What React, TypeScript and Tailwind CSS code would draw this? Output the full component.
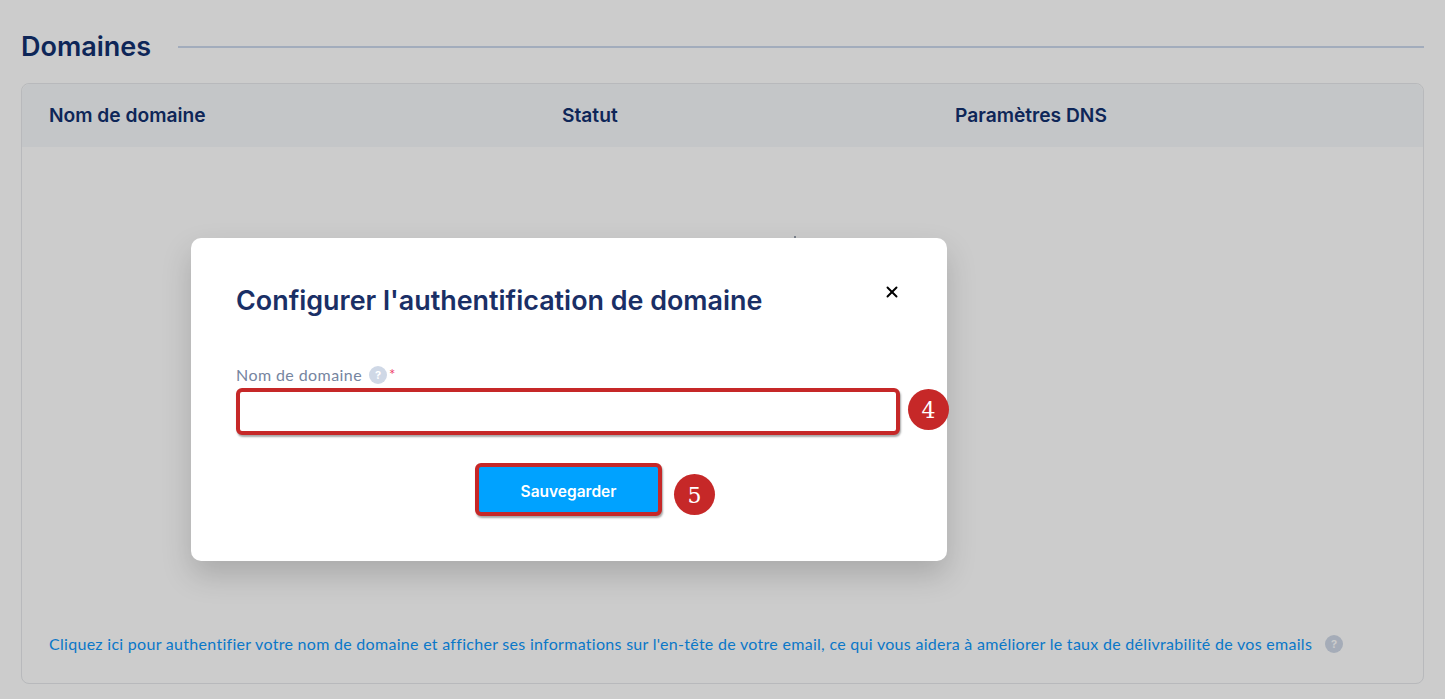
import { X } from 'lucide-react'

function HelpDot({ className }: { className: string }) {
  return (
    <span className={`inline-flex items-center justify-center rounded-full bg-[#cfd8e6] text-white font-bold font-['Inter',sans-serif] ${className}`}>
      ?
    </span>
  )
}

function Badge({ n }: { n: number }) {
  return (
    <span className="flex h-[41px] w-[41px] shrink-0 items-center justify-center rounded-full bg-[#c62828] pt-[1px] text-[22px] text-white font-['DejaVu_Serif',serif]">
      {n}
    </span>
  )
}

export default function App() {
  return (
    <div className="relative h-[699px] overflow-hidden bg-white font-['Inter',sans-serif]">
      <div className="px-[21px] pt-[28px]">
        <div className="flex items-center gap-[27px]">
          <h1 className="text-[27px] leading-[37px] font-semibold text-[#12306f]">Domaines</h1>
          <div className="h-[2px] flex-1 bg-[#cbd8eb]" />
        </div>

        <div className="mt-[18px] flex h-[601px] flex-col rounded-lg border border-[#e6e8eb]">
          <div className="flex h-[63px] items-center rounded-t-lg bg-[#f6f8fa] pl-[27px] text-[19.2px] font-semibold text-[#12306f]">
            <span className="w-[513px]">Nom de domaine</span>
            <span className="w-[393px]">Statut</span>
            <span>Paramètres DNS</span>
          </div>
          <div className="flex-1" />
          <div className="flex items-center pb-[27px] pl-[27px] font-['Lato',sans-serif] text-[16px] tracking-[0.29px] text-[#0d96fb]">
            <span>
              Cliquez ici pour authentifier votre nom de domaine et afficher ses informations sur l'en-tête de votre email, ce qui vous aidera à améliorer le taux de délivrabilité de vos emails
            </span>
            <HelpDot className="ml-[13px] h-[18px] w-[18px] text-[11px] tracking-normal" />
          </div>
        </div>
      </div>

      <div className="absolute left-[794px] top-[236px] h-[2px] w-[2px] bg-[#9aa3b0]" />
      <div className="absolute inset-0 bg-black/20" />

      <div className="absolute left-[191px] top-[238px] h-[323px] w-[756px] rounded-[10px] bg-white px-[45px] pt-[45px] shadow-[0_14px_30px_rgba(0,0,0,0.17)]">
        <div className="flex items-start justify-between">
          <h2 className="text-[26.9px] leading-[35px] font-semibold text-[#1a2f66]">
            Configurer l'authentification de domaine
          </h2>
          <X className="mr-[1px] h-[18px] w-[18px] text-black" strokeWidth={2.6} />
        </div>

        <div className="mt-[47px] flex items-center font-['Lato',sans-serif] text-[16px] tracking-[0.42px] leading-[20px] text-[#76859f]">
          <span>Nom de domaine</span>
          <HelpDot className="ml-[7px] h-[18px] w-[18px] text-[11px] tracking-normal" />
          <span className="ml-[2px] mt-[-3px] text-[15px] text-[#ee3d68]">*</span>
        </div>

        <div className="relative mt-[3px] w-[664px]">
          <div className="h-[47px] rounded-[6px] border-[4px] border-[#c62828] bg-white shadow-[1px_2px_2px_rgba(0,0,0,0.35)]" />
          <div className="absolute left-[672px] top-[1px]">
            <Badge n={4} />
          </div>
        </div>

        <div className="mt-[28px] flex items-center pl-[239px]">
          <button className="flex h-[53px] w-[187px] items-center justify-center rounded-[6px] border-[4px] border-[#c62828] bg-[#00a2ff] pt-[4px] text-[15.5px] font-semibold text-white shadow-[1px_2px_2px_rgba(0,0,0,0.35)]">
            Sauvegarder
          </button>
          <span className="ml-[12px] mt-[10px]">
            <Badge n={5} />
          </span>
        </div>
      </div>
    </div>
  )
}
